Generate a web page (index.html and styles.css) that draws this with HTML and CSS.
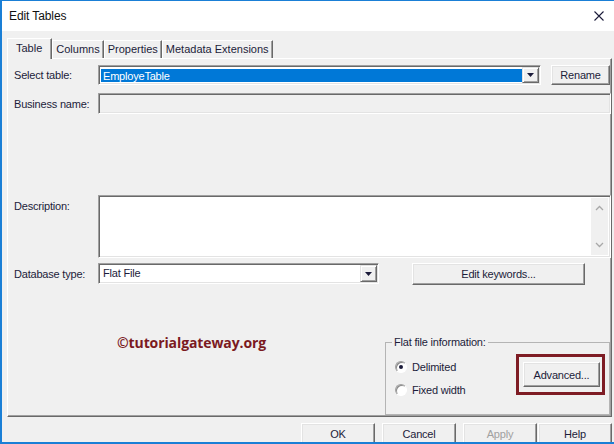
FILE: index.html
```html
<!DOCTYPE html>
<html>
<head>
<meta charset="utf-8">
<title>Edit Tables</title>
<link rel="stylesheet" href="styles.css">
</head>
<body>
<div class="window">
  <div class="titlebar">
    <span class="title">Edit Tables</span>
    <svg class="close" viewBox="0 0 10 10" width="10" height="10"><path d="M0.5 0.5 L9.5 9.5 M9.5 0.5 L0.5 9.5" stroke="#1b1b3a" stroke-width="1.1" fill="none"/></svg>
  </div>
  <div class="client">
    <div class="tabs">
      <div class="tab active">Table</div>
      <div class="tab">Columns</div>
      <div class="tab">Properties</div>
      <div class="tab">Metadata Extensions</div>
    </div>
    <div class="panel">
      <div class="row r-select">
        <span class="lbl">Select table:</span>
        <div class="combo c-table">
          <div class="combo-text selected">EmployeTable</div>
          <div class="drop"><svg viewBox="0 0 7 4" width="7" height="4"><path d="M0 0 H7 L3.5 4 Z" fill="#1b1b3a"/></svg></div>
        </div>
        <button class="btn rename">Rename</button>
      </div>
      <div class="row r-bname">
        <span class="lbl">Business name:</span>
        <div class="field disabled"></div>
      </div>
      <div class="row r-desc">
        <span class="lbl top">Description:</span>
        <div class="field textarea">
          <div class="scroll">
            <svg viewBox="0 0 9 6" width="9" height="6"><path d="M1 5 L4.5 1.5 L8 5" stroke="#a8a8a8" stroke-width="1.3" fill="none"/></svg>
            <svg viewBox="0 0 9 6" width="9" height="6"><path d="M1 1 L4.5 4.5 L8 1" stroke="#a8a8a8" stroke-width="1.3" fill="none"/></svg>
          </div>
        </div>
      </div>
      <div class="row r-db">
        <span class="lbl">Database type:</span>
        <div class="combo c-db">
          <div class="combo-text">Flat File</div>
          <div class="drop"><svg viewBox="0 0 7 4" width="7" height="4"><path d="M0 0 H7 L3.5 4 Z" fill="#1b1b3a"/></svg></div>
        </div>
        <button class="btn keywords">Edit keywords...</button>
      </div>
      <div class="lower">
        <div class="watermark">©tutorialgateway.org</div>
        <fieldset class="group">
          <legend>Flat file information:</legend>
          <div class="group-body">
            <div class="radios">
              <div class="radio"><span class="circle checked"></span><span>Delimited</span></div>
              <div class="radio"><span class="circle"></span><span>Fixed width</span></div>
            </div>
            <div class="highlight"><button class="btn advanced">Advanced...</button></div>
          </div>
        </fieldset>
      </div>
    </div>
    <div class="footer">
      <button class="btn fbtn">OK</button>
      <button class="btn fbtn">Cancel</button>
      <button class="btn fbtn disabled-btn">Apply</button>
      <button class="btn fbtn help">Help</button>
    </div>
  </div>
</div>
</body>
</html>
```

FILE: styles.css
```css
* { box-sizing: border-box; }
html, body { margin: 0; padding: 0; }
body {
  width: 614px;
  height: 444px;
  overflow: hidden;
  background: #fff;
  font-family: "Liberation Sans", Arial, sans-serif;
  font-size: 11px;
  letter-spacing: -0.2px;
  color: #1c1c3a;
}
.window {
  width: 614px;
  height: 444px;
  border-top: 1px solid #1a7fd6;
  border-left: 2px solid #1a7fd6;
  border-bottom: 2px solid #1a7fd6;
  background: #f0f0f0;
  overflow: hidden;
  display: flex;
  flex-direction: column;
}
.titlebar {
  height: 30px;
  flex: none;
  background: #fff;
  display: flex;
  align-items: center;
  padding-left: 7px;
}
.title { font-size: 12px; color: #111; letter-spacing: -0.1px; }
.close { margin-left: auto; margin-right: 10px; }
.client { padding: 7px 2px 0 5px; }

.tabs {
  display: flex;
  align-items: flex-end;
  height: 20px;
  position: relative;
  z-index: 1;
}
.tab {
  height: 18px;
  line-height: 17px;
  padding: 0 3px;
  letter-spacing: 0;
  border-top: 1px solid #fff;
  border-left: 1px solid #fff;
  border-right: 1px solid #696969;
  box-shadow: inset -1px 0 #a0a0a0;
  background: #f0f0f0;
  white-space: nowrap;
}
.tab.active {
  height: 21px;
  margin-bottom: -1px;
  padding: 0 9px 0 8px;
  line-height: 18px;
}

.panel {
  height: 359px;
  border-top: 1px solid #fff;
  border-left: 1px solid #fff;
  border-right: 1px solid #696969;
  border-bottom: 1px solid #696969;
  box-shadow: inset -1px -1px #a0a0a0;
  padding: 6px 0 0 6px;
  display: flex;
  flex-direction: column;
}
.row { display: flex; align-items: center; flex: none; }
.lbl { width: 84px; flex: none; white-space: nowrap; }
.lbl.top { align-self: flex-start; padding-top: 5px; }

.r-select { height: 20px; }
.r-bname { height: 21px; margin-top: 8px; }
.r-desc { height: 63px; margin-top: 81px; align-items: stretch; }
.r-db { height: 21px; margin-top: 5px; }

.combo, .field {
  border: 1px solid;
  border-color: #a0a0a0 #fff #fff #a0a0a0;
  box-shadow: inset 1px 1px #696969, inset -1px -1px #e3e3e3;
}
.combo {
  display: flex;
  height: 100%;
  background: #fff;
  padding: 1px;
}
.c-table { width: 443px; }
.c-db { width: 281px; }
.combo-text {
  flex: 1;
  padding-left: 3px;
  line-height: 17px;
  white-space: nowrap;
}
.combo-text.selected {
  background: #0078d7;
  color: #fff;
  margin: 2px 0 1px 1px;
  line-height: 14px;
  padding-left: 2px;
}
.drop {
  width: 17px;
  flex: none;
  background: #f0f0f0;
  border: 1px solid;
  border-color: #e3e3e3 #696969 #696969 #e3e3e3;
  box-shadow: inset 1px 1px #fff, inset -1px -1px #a0a0a0;
  display: flex;
  align-items: center;
  justify-content: center;
}
.field { flex: 1; height: 100%; }
.field.disabled { background: #f0f0f0; }
.field.textarea {
  background: #fff;
  display: flex;
  justify-content: flex-end;
  padding: 2px;
}
.scroll {
  width: 17px;
  background: #f0f0f0;
  display: flex;
  flex-direction: column;
  align-items: center;
  justify-content: space-between;
  padding: 7px 0 7px;
}

.btn {
  font: inherit;
  letter-spacing: inherit;
  color: #1c1c3a;
  background: #f0f0f0;
  border: 1px solid;
  border-color: #fff #696969 #696969 #fff;
  box-shadow: inset -1px -1px #a0a0a0, inset 1px 1px #e3e3e3;
  padding: 0;
  margin: 0;
  text-align: center;
  white-space: nowrap;
}
.rename { width: 59px; height: 20px; margin-left: 10px; }
.keywords { width: 173px; height: 22px; margin-left: 33px; }

.lower {
  display: flex;
  align-items: flex-start;
  margin-top: 52px;
}
.watermark {
  margin-left: 103px;
  font-family: "Open Sans", "Liberation Sans", sans-serif;
  font-weight: 700;
  font-size: 14px;
  letter-spacing: -0.1px;
  line-height: 14px;
  color: #7b1a1f;
  white-space: nowrap;
}
.group {
  margin: 0 1px 0 auto;
  width: 225px;
  padding: 0;
  border: 1px solid #b4b4b4;
  min-width: 0;
}
.group legend {
  margin-left: 6px;
  padding: 0 2px;
  line-height: 13px;
  font-size: 11px;
}
.group-body {
  display: flex;
  align-items: flex-start;
  padding: 5px 4px 13px 9px;
}
.radios { padding-top: 1px; }
.radio {
  display: flex;
  align-items: center;
  height: 23px;
  gap: 5px;
}
.circle {
  width: 12px;
  height: 12px;
  border-radius: 50%;
  background: #fff;
  border: 1px solid;
  border-color: #a0a0a0 #fff #fff #a0a0a0;
  box-shadow: inset 1px 1px #8a8a8a;
  display: flex;
  align-items: center;
  justify-content: center;
}
.circle.checked::after {
  content: "";
  width: 4px;
  height: 4px;
  border-radius: 50%;
  background: #1c1c3a;
}
.highlight {
  margin-left: auto;
  border: 3px solid #7e1c24;
  padding: 5px 2px 5px 4px;
}
.advanced { width: 77px; height: 25px; display: block; }

.footer {
  display: flex;
  justify-content: flex-end;
  margin-top: 6px;
}
.fbtn { width: 74px; height: 22px; margin-left: 7px; }
.fbtn.help { margin-left: 1px; }
.disabled-btn { color: #a0a0a0; }
```
